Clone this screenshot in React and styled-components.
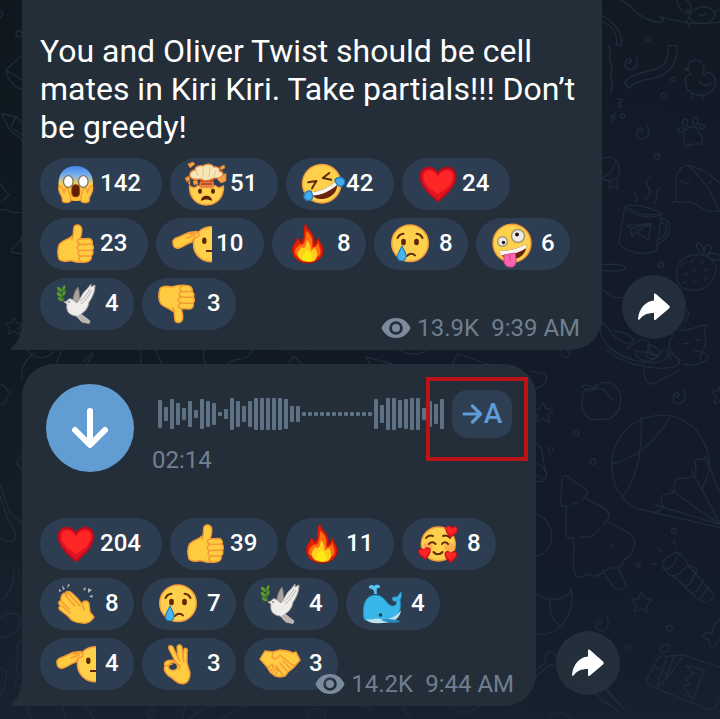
import styled, { createGlobalStyle } from 'styled-components';

const GlobalStyle = createGlobalStyle`
	*{
		box-sizing: border-box;
	}
	body{
		margin: 0;
		background: #131b28;
		font-family: Roboto, 'Liberation Sans', sans-serif;
	}
	button{
		font-family: inherit;
		border: none;
		padding: 0;
		cursor: pointer;
	}
`;

const face = { fill: '#ffd04b', stroke: '#f49a3c', strokeWidth: 1.4 };
const skin = { fill: '#ffcc41', stroke: '#f39a35', strokeWidth: 1.4, strokeLinejoin: 'round', strokeLinecap: 'round' };
const crease = { fill: 'none', stroke: '#f39a35', strokeWidth: 1.5, strokeLinecap: 'round', strokeLinejoin: 'round' };
const brown = { fill: 'none', stroke: '#5e2b0a', strokeWidth: 2, strokeLinecap: 'round', strokeLinejoin: 'round' };

const Thumb = () => (
	<>
		<path d="M16 16C18 11 17 7 18 3C19 0 24 0 25.500 4C26.500 8 25 12 24 15L33 14.500C36 15 37 18 36 20C38 22 37.500 25 36.500 26C37.500 29 36.500 31 35 32C36 35 34 37 32 37.500C26 39 20 38.500 15 36.500C9 38 4 37 3 35C1.500 30 1.500 24 3.500 20C7 16 12 16 16 12Z" {...skin} />
		<path d="M24 15C20 16 21 20 25 20.500L35.500 20M25 20.500C20 21 20 26 25 26.500L36 26.200M25 26.500C21 27 21 31.500 25.500 32L35 32M25.500 32C22 33 22 37 26 38" {...crease} />
	</>
);

const Heart = () => (
	<>
		<path d="M20 38.500C14 33 2 24 1.500 13C1.500 6 6 2.800 10.500 2.800C15 2.800 18 5 20 8.500C22 5 25 2.800 29.500 2.800C34 2.800 38.500 6 38.500 13C38 24 26 33 20 38.500Z" fill="#b80d1d" />
		<path d="M20 36C15 31 4 23 3.500 13C3.500 7.500 7 5 11 5C15.500 5 18 7.500 20 11C22 7.500 25 5 29 5C33 5 36.500 7.500 36.500 13C36 23 25 31 20 36Z" fill="#e31322" />
		<path d="M20 30C15 27 5.500 20 5.500 13C5.500 8.500 8 6.500 11 6.500C15.500 6.500 18 9.500 20 12.500C22 9.500 25 6.500 29 6.500C32.500 6.500 35 8.500 35 13C35 20 25 27 20 30Z" fill="#ff2626" />
	</>
);

const emojis = {
	scream: (
		<>
			<defs>
				<linearGradient id="scream" x1="0" y1="0" x2="0" y2="1">
					<stop offset="0" stopColor="#4087ee" />
					<stop offset=".28" stopColor="#7fb2ee" />
					<stop offset=".52" stopColor="#ffd04b" />
					<stop offset="1" stopColor="#ffc02f" />
				</linearGradient>
			</defs>
			<path d="M19.700 2C30 2 37 9 37 19C37 29 30 37 19.700 37C9 37 2.500 29 2.500 19C2.500 9 9 2 19.700 2Z" fill="url(#scream)" />
			<path d="M3 22C2 26 4 30 6 33L6.500 37.500C9 39 13 39 14.500 37C15 33 14 30 13 27C12 23 9 23 9 26L8 29C7 25 5 21 3 22Z" {...skin} />
			<path d="M36.500 22C37.500 26 35.500 30 33.500 33L33 37.500C30.500 39 26.500 39 25 37C24.500 33 25.500 30 26.500 27C27.500 23 30.500 23 30.500 26L31.500 29C32.500 25 34.500 21 36.500 22Z" {...skin} />
			<ellipse cx="12.300" cy="17.500" rx="4.800" ry="5.800" fill="#fff" stroke="#80755f" strokeWidth="1.300" />
			<ellipse cx="27.300" cy="17.500" rx="4.800" ry="5.800" fill="#fff" stroke="#80755f" strokeWidth="1.300" />
			<rect x="15.700" y="20.500" width="8" height="12.500" rx="4" fill="#5f1f06" stroke="#a64d10" strokeWidth=".8" />
		</>
	),
	exploding: (
		<>
			<path d="M3.500 22L8 24L12 21.500L16 24L21 22L25 24L29 21.500L33 24L37.500 22C38 33 31 41 20.300 41C10 41 3 33 3.500 22Z" {...face} />
			<path d="M15 13H27L28 22L24 24H18L13 22Z" fill="#e98146" />
			<path d="M14 17H28M15 20H26" stroke="#a9421e" strokeWidth="1.300" />
			<path d="M4.500 13C2.500 9 6 6 9 6C9 2 14 1 17 2C21-1 26 0 28 3C33 2 34 6 33.500 7C38 8 38 12 35 14C31 15 29 13 26 15C22 17 18 17 15 15C11 15 7 17 4.500 13Z" fill="#f7e6b7" stroke="#e8873c" strokeWidth="1.300" />
			<path d="M10 5L12 12M17 3L17 13M24 3L23 13M30 6L28 12" stroke="#e2c88b" fill="none" />
			<path d="M2 0L7-2L9 0L4 4ZM34 3L38 1L39 4L35 6ZM-1 14L3 12L4 16L1 18ZM2 19L4 17L4 21ZM7 17L11 16L12 20L8 21ZM31 15L40 9L40 17L35 19Z" fill="#f5a04a" stroke="#dc7527" strokeWidth=".7" />
			<ellipse cx="14" cy="27.300" rx="2" ry="2.700" fill="#5c2707" />
			<ellipse cx="27" cy="27.300" rx="2" ry="2.700" fill="#5c2707" />
			<path d="M15 37C15 30 26 30 26 37C22 35 19 35 15 37Z" fill="#5f1f06" />
		</>
	),
	rofl: (
		<g transform="rotate(-24 19.700 19.700)">
			<circle cx="19.700" cy="19.700" r="19.300" {...face} />
			<path d="M8 13L16 15L9 20M31 13L23 15L30 20" {...brown} />
			<path d="M6 23C14 26 25 26 34 23C34 39 6 39 6 23Z" fill="#66250c" />
			<path d="M6 23C14 26 25 26 34 23L33.500 27C25 30 14 30 6.800 27Z" fill="#f8f6f2" />
			<path d="M7 22C3 19-2 22-2 26C-1 31 5 31 6 28C7 26 7 24 7 22ZM33 22C37 19 42 22 42 26C41 31 35 31 34 28C33 26 33 24 33 22Z" fill="#43ace8" stroke="#2378be" strokeWidth="1.200" />
		</g>
	),
	heart: <Heart />,
	thumbUp: <Thumb />,
	thumbDown: <g transform="translate(-1 39.500) scale(1 -1)"><Thumb /></g>,
	salute: (
		<>
			<path d="M40 2.800C29 2.800 21.500 11 21.500 20.300C21.500 30 29 37.800 40 37.800Z" fill="#ffd04b" />
			<path d="M40 2.800C29 2.800 21.500 11 21.500 20.300C21.500 30 29 37.800 40 37.800" fill="none" stroke="#f49a3c" strokeWidth="1.500" />
			<path d="M1 19C0 16 3 14 7 13L17 8.500L25 7.500C27 9 28 11 26 13C23 13 21 15 20 18C15 19 12 23 7 24C3 25 1 22 1 19Z" {...skin} />
			<path d="M15 14L23 11M17 10L25 9" {...crease} />
			<ellipse cx="32.300" cy="16.700" rx="2.200" ry="3.200" fill="#5c2707" />
			<path d="M34 27H40" stroke="#5c2707" strokeWidth="2" />
		</>
	),
	fire: (
		<>
			<path d="M4.500 25C5 19 8 20 9 14C13 16 12 18 13 19C18 13 13 6 18 0C19 7 28 9 26 21C29 19 28 17 31 14C31 20 35 20 35 27C35 34 28 39 20 39C11 39 4 34 4.500 25Z" fill="#e32109" stroke="#b80f08" />
			<path d="M7 29C7 22 10 24 12 20C15 23 18 18 18 7C24 11 25 17 24 23C28 24 29 21 31 18C30 24 34 25 32 30C30 36 10 37 7 29Z" fill="#ff7011" />
			<path d="M10 32C9 27 12 26 13 23C17 26 18 22 19 16C23 20 22 24 23 27L27 24C30 29 30 34 26 37C21 39 12 38 10 32Z" fill="#ffcf1b" />
			<path d="M14 34C14 30 18 30 19 25C21 29 26 32 24 36C22 38 15 38 14 34Z" fill="#ffea16" />
		</>
	),
	cry: (
		<>
			<circle cx="20" cy="19.300" r="18.300" {...face} />
			<path d="M7.500 14C9 11 11 10 13.500 9.800M26.500 9.800C29 10 31 11 32.500 14" {...brown} />
			<ellipse cx="13.500" cy="18" rx="2.400" ry="3.300" fill="#5c2707" />
			<ellipse cx="26.500" cy="18" rx="2.400" ry="3.300" fill="#5c2707" />
			<path d="M17 32C19 29 23 29 25 31.500" {...brown} />
			<path d="M12 22C14 27 16.500 29 16 33C15 38 8 38 7.500 33C7.500 29 10 27 12 22Z" fill="#4ab4ef" stroke="#237fc0" strokeWidth="1.200" />
		</>
	),
	zany: (
		<>
			<circle cx="20" cy="19.300" r="19" {...face} />
			<circle cx="26" cy="12" r="6.500" fill="#eeece4" stroke="#a49774" strokeWidth="1.500" />
			<circle cx="25" cy="10.500" r="2" fill="#1d1713" />
			<circle cx="10.500" cy="17.500" r="4.800" fill="#eeece4" stroke="#a49774" strokeWidth="1.500" />
			<circle cx="11.500" cy="18.500" r="1.700" fill="#1d1713" />
			<path d="M7 27C16 27 26 25 34 20C37 35 13 42 7 27Z" fill="#65230c" />
			<path d="M7 27C16 27 26 25 34 20L34.300 24C27 29 17 32 9 31Z" fill="#f8f6f2" />
			<path d="M12 31L23 29L24 36C24 42 21 43.500 18 43C14 43 12 40 12 36Z" fill="#ff65af" stroke="#d3428a" />
			<path d="M17.500 31L18 37" stroke="#d3428a" />
		</>
	),
	dove: (
		<>
			<path d="M17 17C17 11 19 7 22 3C24 8 23 14 24 19Z" fill="#aaa39d" stroke="#817b77" strokeWidth=".8" />
			<path d="M11 17C14 12 18 17 21 19C25 14 26 9 31 5L35 0L35 3L39 1C39 8 36 14 33 18C32 25 28 28 25 30L34 37L33 39.500L26 38C23 36 22 33 20 32C12 31 10 26 11 20L8 18Z" fill="#efedeb" stroke="#aaa5a1" />
			<path d="M24 17C28 15 31 10 34 5M25 20C30 17 33 11 36 6M24 31L31 36" stroke="#b7b3af" fill="none" />
			<path d="M25 30L34 37L33 39.500L26 38L21 32Z" fill="#bab5b1" />
			<circle cx="13" cy="18" r=".8" fill="#443d38" />
			<path d="M8 18L6 11L8 2" stroke="#437c27" strokeWidth="1.200" fill="none" />
			<path d="M6 8C2 8 1 5 1 3C5 3 6 5 6 8ZM7 7C9 6 10 3 9 1C6 2 6 5 7 7ZM6 13C2 13 0 10 1 8C4 8 6 10 6 13ZM7 12C10 11 10 7 9 6C7 8 6 10 7 12ZM7 17C3 18 2 15 2 13C5 13 7 15 7 17Z" fill="#5a9b2d" />
		</>
	),
	loving: (
		<>
			<circle cx="20.300" cy="20" r="17" {...face} />
			<circle cx="10" cy="23" r="4.500" fill="#ff9550" opacity=".65" />
			<circle cx="31" cy="23" r="4.500" fill="#ff9550" opacity=".65" />
			<path d="M8 14C10 11.500 12 11 15 12M25 12C28 11 30 11.500 32 14M11 20C12 17.500 16 17.500 17.500 20M24 20C25 17.500 29 17.500 30 20M15.500 28C18 31 22 31 24.500 28" {...brown} />
			<g transform="translate(27.500 0) rotate(8) scale(.34)"><Heart /></g>
			<g transform="translate(-1 24) rotate(-10) scale(.34)"><Heart /></g>
			<g transform="translate(26 26) scale(.34)"><Heart /></g>
		</>
	),
	clap: (
		<>
			<path d="M5 14C6 9 9 8 11 11L10 8C13 6 16 9 21 14L26 20C27 16 32 16 33 20L34 28L38 33C36 37 31 40 27 39C18 39 15 36 12 32L4 26C2 24 3 22 5 22C2 20 2 17 5 17Z" {...skin} />
			<path d="M5 17L13 25M6 22L14 29M9 11L19 22M12 9L24 22M26 20L28 26" {...crease} />
			<path d="M3 5L6 7L3 8ZM6 1L9 5L7 6ZM12 0L14 1L11 4ZM27 5L30 3L29 7ZM32 4L36 6L32 9ZM33 12L37 11L36 14Z" fill="#aeb3b4" />
		</>
	),
	whale: (
		<>
			<path d="M12 10C13 6 10 5 7 4C6 1 10 0 12 2C14 0 19 0 18 4C15 3 14 6 15 10Z" fill="#55c5ee" />
			<path d="M2 35C0 21 3 12 13 11C23 11 24 21 30 22C34 22 35 20 34 17C30 18 30 15 31 13L35 13L39 8C40 11 39 14 38 16C40 26 36 33 29 35C21 39 9 39 2 35Z" fill="#38b6e8" stroke="#218fc9" strokeWidth=".8" />
			<path d="M3 35C10 37 13 33 18 35C25 37 36 32 39 26C38 35 31 39 20 39C12 40 7 39 3 35Z" fill="#bde2ef" />
			<path d="M19 36C24 34 30 35 39 37C35 40 26 39 19 36Z" fill="#268bc5" />
			<circle cx="18.500" cy="31" r="1.700" fill="#15384c" />
		</>
	),
	ok: (
		<>
			<path d="M17 17L11 5C10 1 13 1 15 3L20 14L19 3C20 0 23 0 24 3L25 14L26 5C28 3 30 5 29 8L29 19L32 29C32 34 30 39 26 39.500C21 41 17 37 14 34C8 31 5 26 7 22C5 17 11 15 17 17Z" {...skin} />
			<ellipse cx="15" cy="22.500" rx="4.500" ry="4" fill="#2e3e52" stroke="#f39a35" strokeWidth="1.400" />
			<path d="M17 17L22 22L21 25M20 14L22 17M25 14L26 18M8 22L14 20" {...crease} />
		</>
	),
	handshake: (
		<>
			<path d="M0 15L5 7L13 8L20 6L28 7L33 9L36 8L40 16L35 22L32 25L28 28L25 32L20 33L15 32L10 28L7 23Z" {...skin} />
			<path d="M13 8L12 13C14 16 18 15 20 11L31 20M23 17L30 24M20 19L27 27M16 22L23 31M8 24L12 20L14 23L10 27M13 28L17 24L18 27L15 31M35 22L31 20" {...crease} />
		</>
	),
};

const firstReactions = [
	['scream', 142], ['exploding', 51], ['rofl', 42], ['heart', 24],
	['thumbUp', 23], ['salute', 10], ['fire', 8], ['cry', 8], ['zany', 6],
	['dove', 4], ['thumbDown', 3],
];

const secondReactions = [
	['heart', 204], ['thumbUp', 39], ['fire', 11], ['loving', 8],
	['clap', 8], ['cry', 7], ['dove', 4], ['whale', 4],
	['salute', 4], ['ok', 3], ['handshake', 3],
];

const levels = [
	28, 14, 30, 22, 12, 26, 8, 30, 26, 22, 4, 10, 32, 26, 16, 26, 32, 32, 32, 32, 32, 30, 16, 16,
	4, 4, 4, 4, 4, 4, 4, 4, 4, 4, 4, 4, 30, 18, 32, 32, 28, 30, 32, 32, 12, 26, 20, 30,
];

const Reactions = ({items}) => (
	<ReactionList>
		{items.map(([name, count]) => (
			<Reaction key={name} aria-label={`${name} ${count}`}>
				<Emoji viewBox="0 0 40 40" aria-hidden="true">{emojis[name]}</Emoji>
				<Count $chars={String(count).length}>{count}</Count>
			</Reaction>
		))}
	</ReactionList>
);

const MessageMeta = ({views, time}) => (
	<Meta>
		<svg width="30" height="22" viewBox="0 0 30 22" aria-hidden="true">
			<path fillRule="evenodd" d="M15 1C8 1 3 5 .500 11C3 17 8 21 15 21S27 17 29.500 11C27 5 22 1 15 1ZM15 4.200A6.800 6.800 0 1 1 15 17.800A6.800 6.800 0 1 1 15 4.200ZM15 7A4 4 0 1 0 15 15A4 4 0 1 0 15 7Z" fill="#7b8b9b" />
		</svg>
		<span>{views}</span>
		<time>{time}</time>
	</Meta>
);

const BubbleTail = () => (
	<Tail viewBox="0 0 12 34" aria-hidden="true">
		<path d="M12 0H11C11 15 9 25 1 31C-1 33 0 34 2 34H12Z" fill="#232e39" />
	</Tail>
);

const Forward = () => (
	<ForwardButton aria-label="Forward">
		<svg width="32" height="28" viewBox="0 0 32 28" aria-hidden="true">
			<path d="M16 1.500C16 .500 17 0 18 1L31 12.500C32 13.500 32 14.500 31 15.500L18 26.500C17 27.500 16 27 16 26V20C9 20 5 22 1.500 26.500C1 27 0 27 0 26C1 15 8 8 16 7.500Z" fill="#fff" />
		</svg>
	</ForwardButton>
);

const Spiral = ({x, y}) => (
	<path transform={`translate(${x} ${y})`} d="M-8 9C0 11 6 0-3-3C-15-6-20 12-14 22C-4 37 18 27 20 7C20-2 18-8 14-13" />
);

const Star = ({x, y}) => (
	<path transform={`translate(${x} ${y})`} d="M0-29C4-29 7-12 10-11C14-9 31-11 31-6C30-1 16 5 16 9C16 14 24 27 19 29C14 31 4 19 0 19C-5 19-16 31-20 28C-24 24-14 10-16 7C-18 3-31-3-29-8C-27-12-12-8-9-11C-6-14-4-29 0-29Z" />
);

const Doodles = () => (
	<Wallpaper viewBox="0 0 720 719" preserveAspectRatio="xMidYMid slice" aria-hidden="true">
		<g transform="translate(590 0) scale(.33333)">
			<path d="M90 0C120 8 130 40 170 57C195 66 223 75 220 57L209 50C260 62 310 80 390 66M260 0C265 30 285 45 300 35C306 22 300 5 288 0M296 52C310 15 360 10 376 42C370 75 320 80 296 52M298 40L288 28M296 58L286 68M302 68L294 82M376 35L390 28M326 42Q337 53 347 40" />
			<path d="M36 65C65 75 82 100 80 135H94C98 100 78 68 36 48M236 137H261C263 185 240 225 190 235C155 240 130 248 115 265L103 248C120 225 145 222 180 212C222 205 237 180 236 137ZM55 138C70 160 48 174 63 190C75 207 52 220 65 240C75 255 57 265 65 280M82 297L99 299L87 311C100 315 95 325 84 320M77 338L62 350L78 352L60 366" />
			<path d="M287 232C280 275 315 292 345 284C390 270 380 215 352 218C348 225 343 228 339 222C350 195 330 178 312 181C290 185 288 210 304 222C292 225 288 228 287 232ZM296 202L285 208L297 212M325 242C340 260 350 258 365 250M304 282L307 298M334 282L340 298" />
			<Spiral x={122} y={180} /><Spiral x={157} y={388} />
			<circle cx="174" cy="119" r="6" /><circle cx="248" cy="237" r="6" /><circle cx="221" cy="287" r="8" /><circle cx="98" cy="349" r="7" /><circle cx="201" cy="470" r="8" /><circle cx="213" cy="794" r="8" />
			<path d="M283 400C292 374 321 372 326 398C348 421 337 439 319 431C300 431 291 446 283 432C278 420 282 411 283 400Z" />
			<ellipse cx="272" cy="390" rx="9" ry="7" /><ellipse cx="285" cy="368" rx="8" ry="11" /><ellipse cx="316" cy="363" rx="8" ry="11" /><ellipse cx="336" cy="380" rx="8" ry="7" />
			<path d="M36 476C72 460 94 490 87 520C80 542 55 550 36 535M75 486C70 515 56 526 36 533M60 543L58 565L70 558L82 567L83 540" />
			<path d="M246 608Q258 600 272 608Q300 600 325 618Q355 640 390 632M259 600C253 545 260 502 291 496C340 502 370 535 390 550M291 496C340 535 370 585 385 630M273 542Q286 558 300 542M357 550L365 542" />
			<path d="M105 620L86 730C115 764 170 766 199 752L215 642C185 660 130 650 105 620C125 609 190 621 215 642M120 624C150 648 180 645 203 643M212 657C252 652 248 719 200 733M214 670C238 665 233 708 203 720M110 677L183 671L175 720L139 695L126 711L123 686L183 671L139 695M123 686L110 677M134 605Q148 594 133 578M164 600Q190 580 173 558Q162 537 185 528M190 609Q205 600 201 582Q196 572 208 566" />
			<path d="M263 800C278 758 350 748 376 794C385 824 355 875 313 870C270 875 252 846 263 800ZM340 762C315 745 315 727 327 730Q341 737 343 760C340 730 361 730 365 742Q364 755 350 765C370 755 400 765 388 779Q370 784 350 767" />
			<path d="M280 790L275 800M310 778L302 786M340 782L335 790M291 820L282 825M315 807L308 815M350 805L341 813M289 845L281 850M320 842L311 848M354 834L344 840" />
			<path d="M36 793C60 793 95 790 105 800C110 812 90 816 36 812M36 868C60 880 60 900 95 892C125 890 120 870 118 861C145 875 185 842 185 862C183 884 160 882 150 894M20 990C50 930 55 1030 118 1030C150 1020 112 995 72 993M36 960C15 1010 60 1060 120 1075M110 1048C160 1000 190 1020 175 1050C150 1090 225 1080 205 1048C160 1020 165 1040 200 1070M130 960C150 1010 210 1005 210 960C260 900 320 920 285 965M245 1080C230 1040 240 1015 248 1010L243 985Q255 980 276 993Q310 985 350 973L343 1000C360 1040 325 1058 330 1080M280 1031L298 1030M320 1018L333 1022" />
		</g>
		<g transform="translate(530 350) scale(.33333)">
			<path d="M95 0C85 30 125 25 120 8L105 0M230 0C280 40 320 45 350 50C395 60 450 55 450 30C425 15 420 0 428 0M250 0C300 40 390 50 415 20L410 0M315 0C320 45 365 35 385 20C350 0 330 10 315 0M350 0C370 25 380 18 400 0M340 52C340 108 370 110 390 90C410 80 430 76 450 57M460 42C500 54 540 30 534 15C520 4 500 5 490 0" />
			<path d="M0 65C15 60 20 66 24 72C40 61 53 74 48 93Q30 119 0 116" />
			<Star x={38} y={187} /><Star x={334} y={757} /><Star x={574} y={132} />
			<path d="M194 116C160 112 156 130 157 155C150 195 180 215 210 207C252 215 270 180 272 155C276 120 250 96 228 97C212 96 201 106 194 116C224 110 235 134 247 150M194 116C190 126 170 126 156 109Q172 101 194 116ZM194 100L197 117" />
			<Spiral x={446} y={132} /><Spiral x={215} y={813} />
			<circle cx="139" cy="249" r="8" /><circle cx="189" cy="335" r="8" /><circle cx="431" cy="543" r="7" /><circle cx="325" cy="644" r="6" /><circle cx="418" cy="835" r="9" /><circle cx="292" cy="894" r="8" />
			<path d="M18 283C42 285 35 330 45 355C58 380 40 405 18 393M18 340Q37 345 46 365M20 375L42 387M52 292L62 314M65 291L71 301" />
			<path d="M340 480C270 465 235 390 248 315C265 240 325 195 395 196C470 195 535 255 538 345C539 370 525 400 515 420M333 203C338 300 320 385 278 440M422 198C380 270 325 325 240 344M340 480L570 533M378 465L570 523M422 420L570 523M484 360L570 520M526 320L570 430M340 480C380 495 410 480 395 458C386 430 415 432 434 427C425 385 450 380 470 385C505 375 500 365 495 340C490 322 520 332 528 323" />
			<path d="M116 466L104 468Q92 468 92 456L96 387C98 375 104 375 115 382L164 415C178 427 170 430 166 442C190 465 260 475 228 514C280 540 315 550 314 580C310 610 300 624 283 626C280 654 260 658 247 652C230 666 218 654 217 667C200 684 186 680 168 669C163 687 141 687 133 667C126 650 135 600 130 564C115 564 107 562 107 545L110 466M127 463L144 456M157 450L167 439M150 560C175 562 190 565 195 550M199 546L210 536M217 528L226 516M246 582Q252 590 246 594M222 668L253 715C264 726 290 714 288 704L264 655" />
			<path d="M18 492C80 510 80 610 18 618M18 732C60 760 115 750 124 715C137 785 90 865 18 852M62 750C55 785 70 823 100 830M18 960L47 938C40 910 65 895 75 910C78 935 95 930 85 945C75 955 65 938 55 948L18 980" />
			<path d="M398 650C390 630 435 600 450 610L473 640C480 650 435 686 420 676ZM398 655C435 670 440 610 450 610M430 679L510 752C530 765 555 745 549 731L474 645M463 710Q490 705 495 665M486 730Q510 720 520 690M510 752Q524 720 535 713M475 650C490 645 505 660 498 669M385 596L397 605M363 640L381 642M430 568L436 587" />
			<path d="M388 895Q405 875 421 890Q415 908 396 908ZM385 923Q397 915 412 919L460 915L570 952M385 923L351 989Q350 1002 378 1015L540 1080Q555 1080 570 1045M378 1015Q430 970 460 915M412 919L382 1004M372 950L405 968M435 915L400 1000M468 948L522 960L490 1048L460 1010L481 1002L463 986L493 971ZM570 808Q545 830 545 850Q521 845 517 857Q530 868 539 869Q535 890 548 890Q560 885 570 865" />
			<path d="M144 962C160 1010 180 1025 204 1037L270 1090M225 1010L285 1078M200 980L245 1040M235 1030L276 1070M210 1050L260 1080M55 1107C70 1080 115 1085 122 1107" />
		</g>
		<g>
			<path d="M0 10Q5 14 0 18M22 55L6 70C8 82 16 88 22 89M6 70L22 80M2 114L9 129L22 140M2 114L17 117L22 123M9 129C14 127 11 121 17 117M14 129L22 135M0 184L9 195L2 201M0 210C8 208 12 215 22 212M22 237C20 246 10 246 11 252L22 254" />
			<circle cx="19" cy="34" r="3" />
			<g transform="translate(14 326) scale(.28)"><Star x={0} y={0} /></g>
			<path d="M0 384C5 384 5 390 11 393L6 397C8 403 2 406 0 403M22 455L16 462L22 470M0 485L10 512Q16 520 22 523M0 496L7 517C12 527 22 540 10 542L0 538M2 600C10 594 14 585 14 570M18 570L19 580M0 618C12 609 22 614 20 622C18 635 5 638 0 638M22 640C13 645 22 650 16 656C22 662 12 668 19 675L15 685L22 688M0 668C8 668 9 677 0 697" />
			<path d="M28 350C35 362 52 358 54 350M62 350L56 364M22 380C20 363 29 359 34 353M83 362L92 353C95 356 89 360 86 365M141 350V364M155 350L162 364M204 350C202 358 205 363 207 364M252 350C245 365 235 355 228 364M288 364L294 356L301 364M366 357C370 368 380 372 390 377M366 357L393 364M452 364L458 354L500 368M400 350C410 356 420 355 429 350" />
			<path d="M26 706L32 719M62 706L66 719M85 706L94 719M150 719C144 712 154 704 155 712L150 719M182 719L185 706M190 719C198 710 204 708 211 706M220 719L245 706M308 719C306 708 320 704 325 714V719M363 710C359 704 373 705 372 714L365 717M403 706L410 719M450 706Q465 719 478 706" />
		</g>
	</Wallpaper>
);

export default function App() {
	return (
		<>
			<GlobalStyle />
			<Chat>
				<Doodles />
				<Message>
					<Bubble $width={580} $open>
						<Text>You and Oliver Twist should be cell mates in Kiri Kiri. Take partials!!! Don’t be greedy!</Text>
						<Reactions items={firstReactions} />
						<MessageMeta views="13.9K" time="9:39 AM" />
						<BubbleTail />
					</Bubble>
					<Forward />
				</Message>
				<Message>
					<Bubble $width={514}>
						<Voice>
							<Download aria-label="Download">
								<svg width="88" height="88" viewBox="0 0 88 88" aria-hidden="true">
									<path d="M44 27V60M29 46L44 61L59 46" fill="none" stroke="#fff" strokeWidth="6" strokeLinecap="round" strokeLinejoin="round" />
								</svg>
							</Download>
							<Track>
								<Wave viewBox="0 0 286 32" aria-hidden="true">
									{levels.map((level, i) => (
										<rect key={i} x={i * 6} y={16 - level / 2} width="4" height={level} rx="1" />
									))}
								</Wave>
								<Duration>02:14</Duration>
							</Track>
							<TranscribeWrapper>
								<Transcribe aria-label="Transcribe">
									<svg width="20" height="20" viewBox="0 0 20 20" aria-hidden="true">
										<path d="M2 10H18M10.500 2L18.500 10L10.500 18" fill="none" stroke="currentColor" strokeWidth="3.200" strokeLinecap="round" strokeLinejoin="round" />
									</svg>
									<span>A</span>
								</Transcribe>
								<Highlight />
							</TranscribeWrapper>
						</Voice>
						<Reactions items={secondReactions} />
						<MessageMeta views="14.2K" time="9:44 AM" />
						<BubbleTail />
					</Bubble>
					<Forward />
				</Message>
			</Chat>
		</>
	);
}

const Chat = styled.main`
	position: relative;
	display: flex;
	flex-direction: column;
	gap: 14px;
	min-height: 100vh;
	padding: 0 20px 12px 22px;
	overflow: hidden;
	background: radial-gradient(circle at 88% 45%, #131a29 0%, #131a28 25%, transparent 60%), linear-gradient(to bottom, #0f181f 0%, #101a22 50%, #16232f 100%);
`;

const Wallpaper = styled.svg`
	position: absolute;
	inset: 0;
	width: 100%;
	height: 100%;
	g{
		fill: none;
		stroke: #202b3a;
		stroke-width: 1.3;
		stroke-linecap: round;
		stroke-linejoin: round;
	}
	g[transform]{
		stroke-width: 4;
	}
`;

const Message = styled.article`
	position: relative;
	display: flex;
	align-items: flex-end;
	gap: 20px;
`;

const Bubble = styled.div`
	position: relative;
	flex: 0 1 ${({$width}) => $width}px;
	min-width: 0;
	padding: ${({$open}) => $open ? '32px 18px 20px' : '20px 18px 16px'};
	border-radius: ${({$open}) => $open ? '0 0 32px 0' : '32px 32px 32px 0'};
	background: #232e39;
`;

const Tail = styled.svg`
	position: absolute;
	left: -11px;
	bottom: 0;
	width: 12px;
	height: 34px;
`;

const Text = styled.p`
	margin: 0 0 12px;
	color: #fff;
	font-size: 32px;
	line-height: 38px;
`;

const ReactionList = styled.div`
	display: flex;
	flex-wrap: wrap;
	gap: 8px;
`;

const Reaction = styled.button`
	display: flex;
	align-items: center;
	gap: 4px;
	height: 52px;
	padding: 0 10px 0 16px;
	border-radius: 26px;
	background: #2e3e52;
	color: #fff;
	font-size: 24px;
	font-weight: 500;
	line-height: 28px;
`;

const Emoji = styled.svg`
	width: 40px;
	height: 40px;
	overflow: visible;
`;

const Count = styled.span`
	width: ${({$chars}) => $chars * 14 + 10}px;
	padding-bottom: 2px;
	padding-left: ${({$chars}) => $chars === 1 ? 5 : 0}px;
	text-align: left;
`;

const Meta = styled.div`
	position: absolute;
	right: 22px;
	bottom: 8px;
	display: flex;
	align-items: center;
	gap: 6px;
	color: #6f7f8f;
	font-size: 24px;
	line-height: 28px;
	time{
		margin-left: 6px;
	}
`;

const ForwardButton = styled.button`
	display: flex;
	align-items: center;
	justify-content: center;
	flex: none;
	width: 64px;
	height: 64px;
	margin-bottom: 11px;
	border-radius: 50%;
	background: rgba(37, 49, 61, 0.9);
`;

const Voice = styled.div`
	display: flex;
	align-items: flex-start;
	margin-bottom: 46px;
	padding-left: 6px;
`;

const Download = styled.button`
	flex: none;
	width: 88px;
	height: 88px;
	border-radius: 50%;
	background: #619dd3;
`;

const Track = styled.div`
	display: flex;
	flex-direction: column;
	flex: 0 1 292px;
	gap: 18px;
	min-width: 0;
	margin: 14px 8px 0 18px;
`;

const Wave = styled.svg`
	width: 100%;
	height: 32px;
	padding-left: 6px;
	fill: #5f7184;
`;

const Duration = styled.span`
	color: #73808f;
	font-size: 24px;
	line-height: 24px;
`;

const TranscribeWrapper = styled.div`
	position: relative;
	flex: none;
	margin-top: 6px;
`;

const Transcribe = styled.button`
	display: flex;
	align-items: center;
	justify-content: center;
	gap: 2px;
	width: 60px;
	height: 48px;
	border-radius: 16px;
	background: #2e3f53;
	color: #5d9cd6;
	font-size: 28px;
	font-weight: 500;
	line-height: 32px;
`;

const Highlight = styled.div`
	position: absolute;
	inset: -13px -16px -23px -26px;
	border: 4px solid #b91519;
	pointer-events: none;
`;
